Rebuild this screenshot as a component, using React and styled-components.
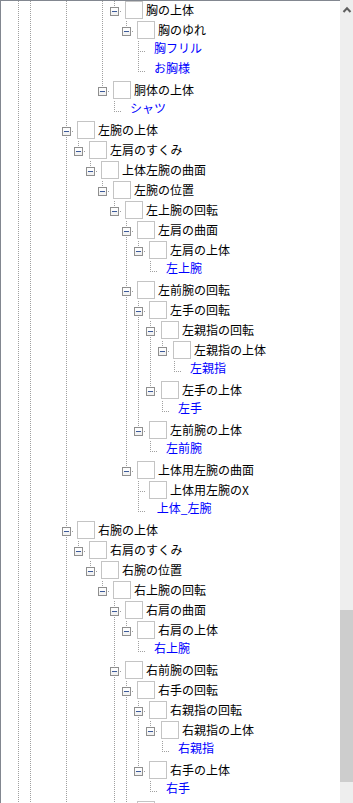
import React from 'react';
import styled, { createGlobalStyle } from 'styled-components';

// colours_________________________________

const LINE = '#a0a0a0';
const FRAME = '#828790';

const ROW_HEIGHT = 20;
const VIEW_HEIGHT = 803;

// styled-components_________________________________

const GlobalStyle = createGlobalStyle`
html, body {
    margin: 0;
    padding: 0;
    background: #fff;
}
body {
    font-family: "Noto Sans CJK JP", "Noto Sans", sans-serif;
}`;

const Page = styled.div`
display: flex;
width: 353px;
height: ${VIEW_HEIGHT}px;
overflow: hidden;
background: #fff;`;

const TreePane = styled.div`
flex: 1;
min-width: 0;
border-top: 1px solid ${FRAME};
border-left: 1px solid ${FRAME};
overflow: hidden;`;

const TreeList = styled.ul`
list-style: none;
margin: -1px 0 0;
padding: 0 0 0 11px;`;

const Row = styled.li`
display: flex;
align-items: flex-start;
height: ${ROW_HEIGHT}px;
white-space: nowrap;`;

const Guide = styled.span`
flex: none;
width: 12px;
height: ${ROW_HEIGHT}px;
background: ${props => props.$on
        ? `linear-gradient(to bottom, transparent 1px, ${LINE} 1px) 6px 0 / 1px 2px repeat-y`
        : 'none'};`;

const Joint = styled.svg`
flex: none;
display: block;
shape-rendering: crispEdges;`;

const Check = styled.span`
flex: none;
box-sizing: border-box;
width: 18px;
height: 18px;
margin-top: 1px;
border: 1px solid #c4c4c4;
background: #fff;`;

const Label = styled.span`
margin-left: ${props => props.$leaf ? 5 : 3}px;
font-size: 12px;
line-height: ${props => props.$leaf ? 16 : 20}px;
white-space: pre;
color: ${props => props.$leaf ? '#0000ff' : '#000'};`;

const ScrollBar = styled.div`
flex: none;
width: 13px;
display: flex;
flex-direction: column;
background: #eeeeee;`;

const ArrowUp = styled.svg`
flex: none;
display: block;`;

const Thumb = styled.div`
flex: none;
height: ${props => props.$size}px;
margin-top: ${props => props.$offset}px;
background: #cdcdcd;`;

// data_________________________________

const node = (label, kids) => ({ label, kids });
const item = (label) => ({ label });
const leaf = (label) => ({ label, leaf: true });

const leftArm = node('左腕の上体', [
    node('左肩のすくみ', [
        node('上体左腕の曲面', [
            node('左腕の位置', [
                node('左上腕の回転', [
                    node('左肩の曲面', [node('左肩の上体', [leaf('左上腕')])]),
                    node('左前腕の回転', [
                        node('左手の回転', [
                            node('左親指の回転', [node('左親指の上体', [leaf('左親指')])]),
                            node('左手の上体', [leaf('左手')]),
                        ]),
                        node('左前腕の上体', [leaf('左前腕')]),
                    ]),
                    node('上体用左腕の曲面', [item('上体用左腕のX'), leaf(' 上体_左腕')]),
                ]),
            ]),
        ]),
    ]),
]);

const rightArm = node('右腕の上体', [
    node('右肩のすくみ', [
        node('右腕の位置', [
            node('右上腕の回転', [
                node('右肩の曲面', [node('右肩の上体', [leaf('右上腕')])]),
                node('右前腕の回転', [
                    node('右手の回転', [
                        node('右親指の回転', [node('右親指の上体', [leaf('右親指')])]),
                        node('右手の上体', [leaf('右手')]),
                    ]),
                    node('右前腕の上体', [leaf('右前腕')]),
                ]),
                node('上体用右腕の曲面', [item('上体用右腕のX'), leaf('上体_右腕')]),
            ]),
        ]),
    ]),
]);

// the list is scrolled: each branch that starts in view keeps the guide lines of its hidden ancestors
const sections = [
    { guides: [1, 1, 0, 0, 1, 0, 0, 1], nodes: [node('胸の上体', [node('胸のゆれ', [leaf('胸フリル'), leaf('お胸様')])])] },
    { guides: [1, 1, 0, 0, 1, 0, 0], nodes: [node('胴体の上体', [leaf('シャツ')])] },
    { guides: [1, 1, 0, 0], nodes: [leftArm, rightArm, node('首の上体', [leaf('首')])] },
];

function flatten(nodes, guides, rows) {
    nodes.forEach((n, i) => {
        const hasNext = i < nodes.length - 1;
        rows.push({ ...n, guides, hasNext });
        if (n.kids) flatten(n.kids, [...guides, hasNext], rows);
    });
    return rows;
}

const rows = sections.reduce(
    (acc, s) => flatten(s.nodes, s.guides.map(Boolean), acc), []);

// only the rows that reach into the view are rendered (virtual list)
const visibleRows = rows.slice(0, Math.ceil(VIEW_HEIGHT / ROW_HEIGHT));

// components_________________________________

function Connector({ expander, hasNext }) {
    return (
        <Joint width="17" height="20" viewBox="0 0 17 20">
            <line x1="6.5" y1="1" x2="6.5" y2={hasNext ? 20 : 12}
                stroke={LINE} strokeDasharray="1 1" />
            <line x1="6" y1="11.5" x2="14" y2="11.5"
                stroke={LINE} strokeDasharray="1 1" />
            {expander && (
                <g>
                    <rect x="2.5" y="7.5" width="8" height="8" fill="#f2f2f2" stroke="#8f8f8f" />
                    <rect x="3" y="8" width="7" height="3" fill="#fdfdfd" />
                    <rect x="4" y="11" width="5" height="1" fill="#3c5a99" />
                </g>
            )}
        </Joint>
    );
}

function Scroller() {
    return (
        <ScrollBar>
            <ArrowUp width="13" height="17" viewBox="0 0 13 17">
                <polyline points="3.5,12 7,8.2 10.5,12" fill="none"
                    stroke="#5f5f5f" strokeWidth="2" />
            </ArrowUp>
            <Thumb $offset={593} $size={172} />
        </ScrollBar>
    );
}

function App() {
    return (
        <Page>
            <GlobalStyle />
            <TreePane>
                <TreeList>
                    {visibleRows.map((r, idx) => (
                        <Row key={idx}>
                            {r.guides.map((on, k) => <Guide key={k} $on={on} />)}
                            <Connector expander={!!r.kids} hasNext={r.hasNext} />
                            {!r.leaf && <Check />}
                            <Label $leaf={r.leaf}>{r.label}</Label>
                        </Row>
                    ))}
                </TreeList>
            </TreePane>
            <Scroller />
        </Page>
    );
}

export default App;
